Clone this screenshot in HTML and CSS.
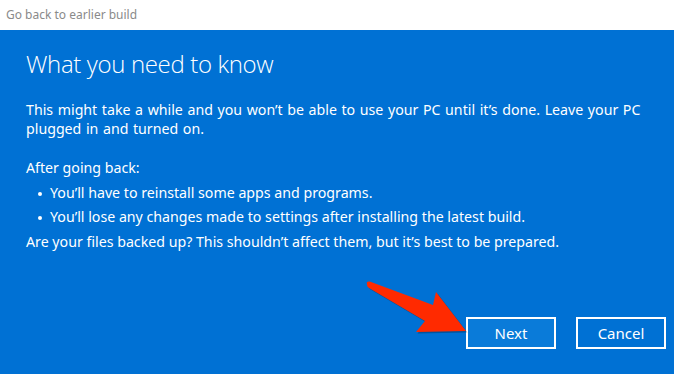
FILE: index.html
```html
<!DOCTYPE html>
<html lang="en">
<head>
    <meta charset="UTF-8">
    <title>Go back to earlier build</title>
    <link rel="stylesheet" href="styles.css">
</head>
<body>
    <div class="window">
        <div class="title-bar">Go back to earlier build</div>

        <div class="dialog">
            <h1>What you need to know</h1>
            <p class="intro">This might take a while and you won’t be able to use your PC until it’s done. Leave your PC plugged in and turned on.</p>

            <p class="after">After going back:</p>
            <ul class="points">
                <li>You’ll have to reinstall some apps and programs.</li>
                <li>You’ll lose any changes made to settings after installing the latest build.</li>
            </ul>
            <p class="backup">Are your files backed up? This shouldn’t affect them, but it’s best to be prepared.</p>

            <div class="actions">
                <button class="btn btn-next">Next</button>
                <button class="btn">Cancel</button>
            </div>

            <!-- annotation arrow pointing at Next -->
            <svg class="arrow" width="110" height="60" viewBox="0 0 110 60">
                <path d="M2 3 C1 1 3 0 6 1 L68 24 L71 11 L101 50 L51 51 L60 40 L4 7 C2 6 2 4 2 3 Z" fill="rgba(0,0,0,0.25)" transform="translate(1.5 1.5)"/>
                <path d="M2 3 C1 1 3 0 6 1 L68 24 L71 11 L101 50 L51 51 L60 40 L4 7 C2 6 2 4 2 3 Z" fill="#ff2a00"/>
            </svg>
        </div>
    </div>
</body>
</html>
```

FILE: styles.css
```css
* {
    margin: 0;
    padding: 0;
    box-sizing: border-box;
}

body {
    width: 674px;
    height: 374px;
    overflow: hidden;
    font-family: 'Noto Sans', 'Open Sans', sans-serif;
    background: #ffffff;
}

.window {
    display: flex;
    flex-direction: column;
    height: 374px;
}

.title-bar {
    height: 30px;
    padding: 6px 0 0 6px;
    font-size: 12px;
    color: #8a8a8a;
    background: #ffffff;
}

.dialog {
    position: relative;
    flex: 1;
    display: flex;
    flex-direction: column;
    background: #0071d4;
    color: #ffffff;
    padding: 18px 8px 25px 26px;
}

h1 {
    font-family: 'Open Sans', sans-serif;
    font-weight: 300;
    font-size: 24px;
    letter-spacing: -0.35px;
    line-height: 32px;
    margin-bottom: 20px;
}

.intro,
.after,
.backup,
.points li {
    font-size: 14.2px;
}

.intro {
    max-width: 625px;
    line-height: 19px;
    word-spacing: 0.9px;
    margin-bottom: 18px;
}

.after,
.backup {
    line-height: 24.5px;
}

.points {
    list-style: none;
}

.points li {
    position: relative;
    line-height: 24.5px;
    padding-left: 24px;
}

.points li::before {
    content: '';
    position: absolute;
    left: 12px;
    top: 11px;
    width: 4px;
    height: 4px;
    border-radius: 50%;
    background: #ffffff;
}

.actions {
    margin-top: auto;
    display: flex;
    justify-content: flex-end;
    gap: 20px;
}

.btn {
    width: 90px;
    height: 32px;
    border: 2px solid #ffffff;
    background: transparent;
    color: #ffffff;
    font-family: 'Noto Sans', sans-serif;
    font-size: 15px;
}

.btn-next {
    background: #0a7bd9;
}

.arrow {
    position: absolute;
    left: 365px;
    top: 251px;
}
```
